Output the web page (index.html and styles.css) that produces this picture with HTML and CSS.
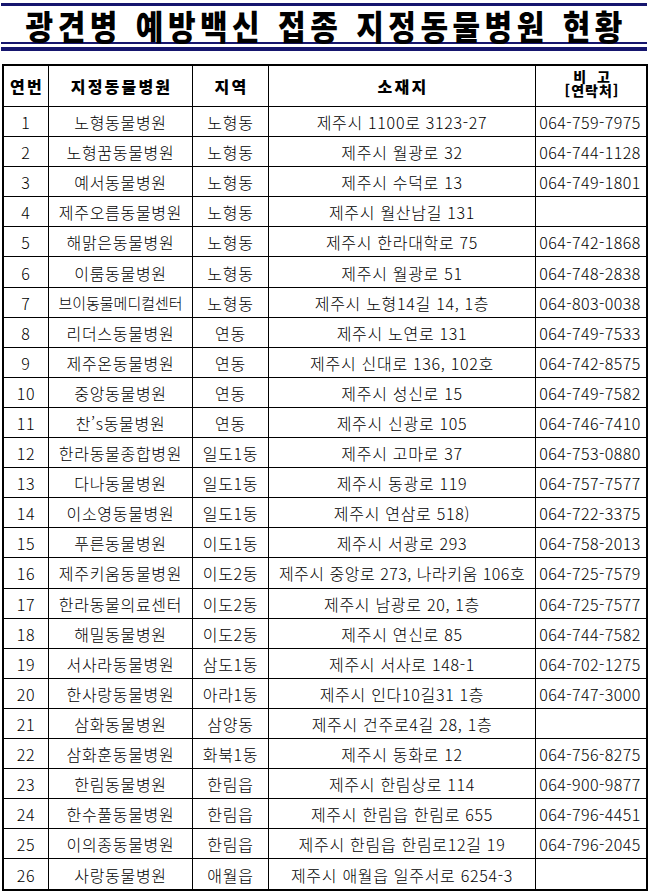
FILE: index.html
```html
<!DOCTYPE html>
<html lang="ko">
<head>
<meta charset="utf-8">
<title>광견병 예방백신 접종 지정동물병원 현황</title>
<link rel="stylesheet" href="styles.css">
</head>
<body>
<div class="page">
  <header class="title-block">
    <h1 class="title"><span class="title-text">광견병 예방백신 접종 지정동물병원 현황</span></h1>
    <div class="rule-thin"></div>
    <div class="rule-thick"></div>
  </header>
  <table class="list">
    <colgroup>
      <col class="c-no"><col class="c-name"><col class="c-area"><col class="c-addr"><col class="c-tel">
    </colgroup>
    <thead>
      <tr><th>연번</th><th>지정동물병원</th><th>지역</th><th>소재지</th><th class="note"><span class="note-line">비&nbsp; 고</span><span class="note-line">[연락처]</span></th></tr>
    </thead>
    <tbody>
      <tr><td>1</td><td>노형동물병원</td><td>노형동</td><td>제주시 1100로 3123-27</td><td class="tel">064-759-7975</td></tr>
      <tr><td>2</td><td>노형꿈동물병원</td><td>노형동</td><td>제주시 월광로 32</td><td class="tel">064-744-1128</td></tr>
      <tr><td>3</td><td>예서동물병원</td><td>노형동</td><td>제주시 수덕로 13</td><td class="tel">064-749-1801</td></tr>
      <tr><td>4</td><td>제주오름동물병원</td><td>노형동</td><td>제주시 월산남길 131</td><td class="tel"></td></tr>
      <tr><td>5</td><td>해맑은동물병원</td><td>노형동</td><td>제주시 한라대학로 75</td><td class="tel">064-742-1868</td></tr>
      <tr><td>6</td><td>이룸동물병원</td><td>노형동</td><td>제주시 월광로 51</td><td class="tel">064-748-2838</td></tr>
      <tr><td>7</td><td class="tight">브이동물메디컬센터</td><td>노형동</td><td>제주시 노형14길 14, 1층</td><td class="tel">064-803-0038</td></tr>
      <tr><td>8</td><td>리더스동물병원</td><td>연동</td><td>제주시 노연로 131</td><td class="tel">064-749-7533</td></tr>
      <tr><td>9</td><td>제주온동물병원</td><td>연동</td><td>제주시 신대로 136, 102호</td><td class="tel">064-742-8575</td></tr>
      <tr><td>10</td><td>중앙동물병원</td><td>연동</td><td>제주시 성신로 15</td><td class="tel">064-749-7582</td></tr>
      <tr><td>11</td><td>찬’s동물병원</td><td>연동</td><td>제주시 신광로 105</td><td class="tel">064-746-7410</td></tr>
      <tr><td>12</td><td>한라동물종합병원</td><td>일도1동</td><td>제주시 고마로 37</td><td class="tel">064-753-0880</td></tr>
      <tr><td>13</td><td>다나동물병원</td><td>일도1동</td><td>제주시 동광로 119</td><td class="tel">064-757-7577</td></tr>
      <tr><td>14</td><td>이소영동물병원</td><td>일도1동</td><td>제주시 연삼로 518)</td><td class="tel">064-722-3375</td></tr>
      <tr><td>15</td><td>푸른동물병원</td><td>이도1동</td><td>제주시 서광로 293</td><td class="tel">064-758-2013</td></tr>
      <tr><td>16</td><td>제주키움동물병원</td><td>이도2동</td><td class="long">제주시 중앙로 273, 나라키움 106호</td><td class="tel">064-725-7579</td></tr>
      <tr><td>17</td><td>한라동물의료센터</td><td>이도2동</td><td>제주시 남광로 20, 1층</td><td class="tel">064-725-7577</td></tr>
      <tr><td>18</td><td>해밀동물병원</td><td>이도2동</td><td>제주시 연신로 85</td><td class="tel">064-744-7582</td></tr>
      <tr><td>19</td><td>서사라동물병원</td><td>삼도1동</td><td>제주시 서사로 148-1</td><td class="tel">064-702-1275</td></tr>
      <tr><td>20</td><td>한사랑동물병원</td><td>아라1동</td><td>제주시 인다10길31 1층</td><td class="tel">064-747-3000</td></tr>
      <tr><td>21</td><td>삼화동물병원</td><td>삼양동</td><td>제주시 건주로4길 28, 1층</td><td class="tel"></td></tr>
      <tr><td>22</td><td>삼화훈동물병원</td><td>화북1동</td><td>제주시 동화로 12</td><td class="tel">064-756-8275</td></tr>
      <tr><td>23</td><td>한림동물병원</td><td>한림읍</td><td>제주시 한림상로 114</td><td class="tel">064-900-9877</td></tr>
      <tr><td>24</td><td>한수풀동물병원</td><td>한림읍</td><td>제주시 한림읍 한림로 655</td><td class="tel">064-796-4451</td></tr>
      <tr><td>25</td><td>이의종동물병원</td><td>한림읍</td><td>제주시 한림읍 한림로12길 19</td><td class="tel">064-796-2045</td></tr>
      <tr><td>26</td><td>사랑동물병원</td><td>애월읍</td><td>제주시 애월읍 일주서로 6254-3</td><td class="tel"></td></tr>
    </tbody>
  </table>
</div>
</body>
</html>
```

FILE: styles.css
```css
* { box-sizing: border-box; }

html, body {
  margin: 0;
  padding: 0;
  background: #ffffff;
}

body {
  font-family: "Noto Sans CJK KR", "Noto Sans", sans-serif;
  color: #000;
}

.page {
  width: 651px;
  padding-top: 3px;
}

.title-block {
  margin-left: 1px;
  width: 646px;
}

.title {
  margin: 0;
  border-top: 3px solid #16166e;
  height: 39px;
  text-align: center;
  font-size: 30px;
  font-weight: 900;
  line-height: 38px;
  white-space: nowrap;
}

.title-text {
  display: inline-block;
  transform: scaleY(1.12);
  letter-spacing: 4.5px;
  word-spacing: 1px;
  margin-right: -4.5px;
}

.rule-thin {
  height: 2px;
  background: #16166e;
}

.rule-thick {
  margin-top: 3px;
  height: 4px;
  background: #16166e;
}

.list {
  margin: 13px 0 0 2px;
  width: 646px;
  table-layout: fixed;
  border-collapse: separate;
  border-spacing: 0;
  border: 2px solid #000;
}

.c-no { width: 45px; }
.c-name { width: 144px; }
.c-area { width: 76px; }
.c-addr { width: 267px; }
.c-tel { width: 110px; }

.list th,
.list td {
  padding: 0;
  border-right: 1px solid #000;
  border-bottom: 1px solid #000;
  text-align: center;
  vertical-align: middle;
  white-space: nowrap;
  overflow: hidden;
}

.list th:last-child,
.list td:last-child {
  border-right: none;
}

.list tbody tr:last-child td {
  border-bottom: none;
}

.list th {
  height: 41px;
  font-size: 16px;
  font-weight: 900;
  line-height: 17px;
  letter-spacing: 2.2px;
  padding-left: 2px;
}

.list th.note {
  font-size: 14px;
  letter-spacing: 1px;
  padding-bottom: 6px;
}

.note-line {
  display: block;
  height: 14px;
  line-height: 14px;
}

.list td {
  height: 30.1px;
  font-size: 16px;
  font-weight: 300;
  line-height: 18px;
  letter-spacing: 0.7px;
  padding-top: 1px;
}

.list td.tight {
  font-size: 15px;
  letter-spacing: 0;
}

.list td.long {
  letter-spacing: 0.5px;
}

.list td.tel {
  letter-spacing: 0.45px;
  padding-right: 2px;
}
```
